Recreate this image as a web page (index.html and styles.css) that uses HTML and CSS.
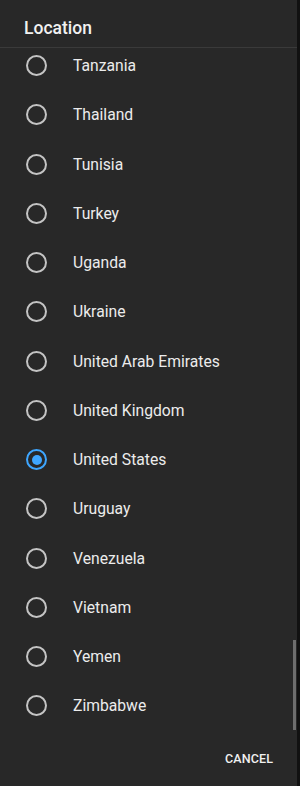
FILE: index.html
```html
<!DOCTYPE html>
<html lang="en">
<head>
  <meta charset="utf-8" />
  <meta name="viewport" content="width=device-width, initial-scale=1.0" />
  <title>Location</title>
  <link rel="stylesheet" href="styles.css">
</head>
<body>

  <div class="dialog">
    <div class="dialog-title">Location</div>

    <div class="options">
      <div class="options-inner">
        <div class="option"><span class="radio"></span><span class="label">Tanzania</span></div>
        <div class="option"><span class="radio"></span><span class="label">Thailand</span></div>
        <div class="option"><span class="radio"></span><span class="label">Tunisia</span></div>
        <div class="option"><span class="radio"></span><span class="label">Turkey</span></div>
        <div class="option"><span class="radio"></span><span class="label">Uganda</span></div>
        <div class="option"><span class="radio"></span><span class="label">Ukraine</span></div>
        <div class="option"><span class="radio"></span><span class="label">United Arab Emirates</span></div>
        <div class="option"><span class="radio"></span><span class="label">United Kingdom</span></div>
        <div class="option"><span class="radio checked"></span><span class="label">United States</span></div>
        <div class="option"><span class="radio"></span><span class="label">Uruguay</span></div>
        <div class="option"><span class="radio"></span><span class="label">Venezuela</span></div>
        <div class="option"><span class="radio"></span><span class="label">Vietnam</span></div>
        <div class="option"><span class="radio"></span><span class="label">Yemen</span></div>
        <div class="option"><span class="radio"></span><span class="label">Zimbabwe</span></div>
      </div>
      <div class="scrollbar"></div>
    </div>

    <div class="dialog-actions">
      <button class="cancel">CANCEL</button>
    </div>
  </div>

</body>
</html>
```

FILE: styles.css
```css
body {
  margin: 0;
  font-family: Roboto, "Liberation Sans", Arial, sans-serif;
  background-color: #111;
  color: #eee;
}

.dialog {
  width: 297px;
  height: 786px;
  background: #282828;
  display: flex;
  flex-direction: column;
}

.dialog-title {
  height: 48px;
  box-sizing: border-box;
  padding: 8px 24px 0;
  display: flex;
  align-items: center;
  font-size: 17.5px;
  font-weight: 500;
  color: #f1f1f1;
  border-bottom: 1px solid #3a3a3a;
}

.options {
  position: relative;
  height: 682px;
  overflow: hidden;
}

.options-inner {
  margin-top: -7px;
}

.option {
  height: 49.25px;
  display: flex;
  align-items: center;
  padding-left: 26px;
}

.radio {
  width: 21px;
  height: 21px;
  border: 2px solid #c4c4c4;
  border-radius: 50%;
  box-sizing: border-box;
  position: relative;
  flex-shrink: 0;
}

.radio.checked {
  border-color: #3ea6ff;
}

.radio.checked::after {
  content: "";
  position: absolute;
  top: 3.5px;
  left: 3.5px;
  width: 10px;
  height: 10px;
  border-radius: 50%;
  background: #3ea6ff;
}

.label {
  margin-left: 26px;
  font-size: 15.7px;
  color: #ececec;
}

.scrollbar {
  position: absolute;
  right: 1px;
  top: 592px;
  width: 3px;
  height: 90px;
  background: #6e6e6e;
}

.dialog-actions {
  flex: 1;
  display: flex;
  justify-content: flex-end;
  align-items: center;
  padding-right: 16px;
}

.cancel {
  background: none;
  border: none;
  color: #f0f0f0;
  font-family: inherit;
  font-size: 12.5px;
  font-weight: 500;
  padding: 6px 8px;
  letter-spacing: 0.1px;
}
```
